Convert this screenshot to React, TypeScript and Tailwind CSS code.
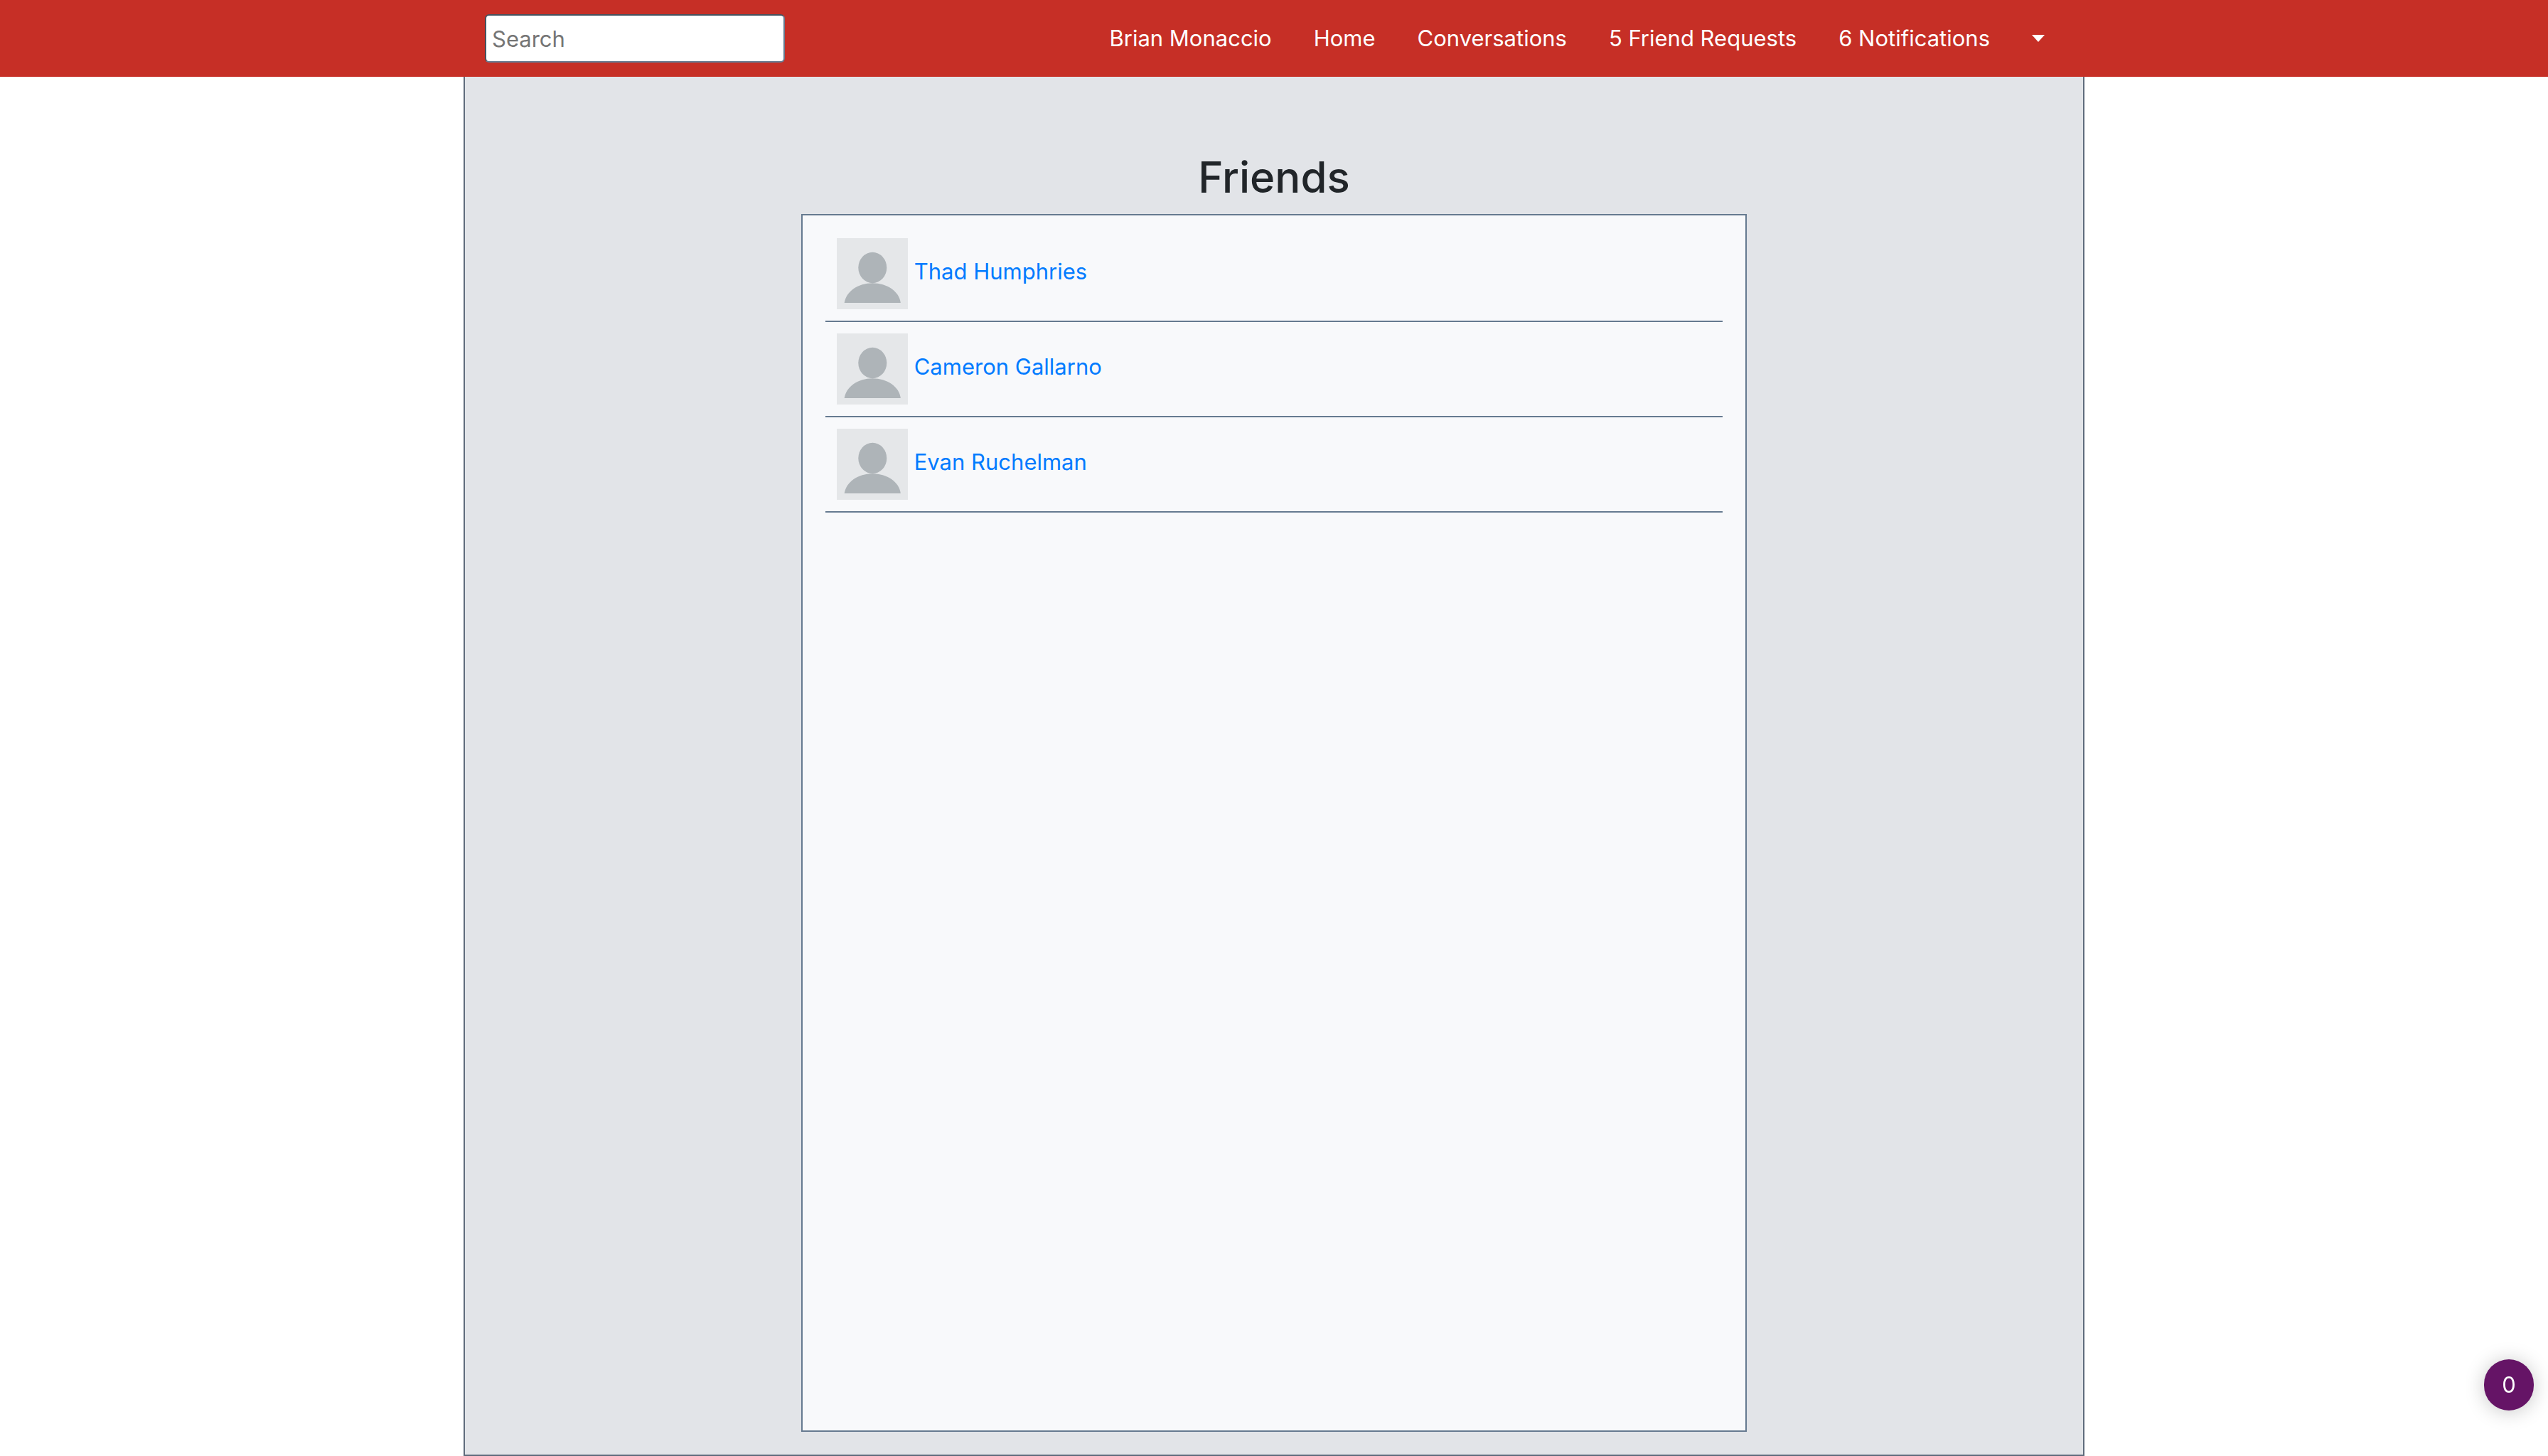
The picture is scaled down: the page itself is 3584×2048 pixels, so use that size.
const navLinks = [
  "Brian Monaccio",
  "Home",
  "Conversations",
  "5 Friend Requests",
  "6 Notifications",
];

const friends = ["Thad Humphries", "Cameron Gallarno", "Evan Ruchelman"];

function Avatar() {
  return (
    <svg
      viewBox="0 0 100 100"
      className="inline-block size-[100px] align-middle"
      aria-hidden="true"
    >
      <rect width="100" height="100" fill="#e5e7e9" />
      <ellipse cx="50.3" cy="41.5" rx="20" ry="21.7" fill="#aeb4b8" />
      <path
        d="M10.7 91C13 75 30 63.300 50.300 63.300S88 75 89.800 91Z"
        fill="#aeb4b8"
      />
    </svg>
  );
}

function NavBar() {
  return (
    <header className="bg-[#c62f26]">
      <div className="mx-auto flex h-[108px] w-full max-w-[2280px] items-center justify-between pr-14 pl-[30px]">
        <form role="search" onSubmit={(e) => e.preventDefault()}>
          <input
            type="search"
            aria-label="Search"
            placeholder="Search"
            className="block h-[68px] w-[422px] rounded-md border-2 border-t-[#44525f] border-r-[#667a90] border-b-[#667a90] border-l-[#44525f] bg-white px-2 text-[31px] text-gray-900 placeholder:text-[#757575]"
          />
        </form>
        <nav className="flex items-center gap-[59px] text-[31px] leading-[48px] text-white">
          {navLinks.map((label) => (
            <a key={label} href="#" className="whitespace-nowrap">
              {label}
            </a>
          ))}
          <button type="button" aria-label="Open menu" className="block">
            <svg viewBox="0 0 18 10" className="h-[10px] w-[18px]">
              <path d="M0 0H18L9 10Z" fill="#fff" />
            </svg>
          </button>
        </nav>
      </div>
    </header>
  );
}

function FriendRow({ name }: { name: string }) {
  return (
    <li className="border-b-2 border-[#667a90] p-4">
      <a href="#" className="block text-[#007bff]">
        <Avatar /> {name}
      </a>
    </li>
  );
}

export default function App() {
  return (
    <div className="flex min-h-screen flex-col bg-white font-[Inter,sans-serif] text-[31px] leading-[48px] text-[#212529]">
      <NavBar />
      <main className="mx-auto flex w-full max-w-[2280px] flex-1 flex-col items-center border-2 border-t-0 border-[#5f6b7c] bg-[#e2e4e8] pt-[102px] pb-8">
        <h1 className="mb-3 text-[60px] leading-[79px] font-medium">Friends</h1>
        <section
          aria-label="Friends"
          className="w-full max-w-[1330px] flex-1 border-2 border-[#667a90] bg-[#f8f9fb] px-8 py-4"
        >
          <ul>
            {friends.map((name) => (
              <FriendRow key={name} name={name} />
            ))}
          </ul>
        </section>
      </main>
      <button
        type="button"
        className="fixed right-5 bottom-16 h-[72px] w-[70px] rounded-full bg-[#651466] text-center text-[31px] text-white shadow-[0_2px_28px_rgba(0,0,0,0.22)]"
      >
        0
      </button>
    </div>
  );
}
